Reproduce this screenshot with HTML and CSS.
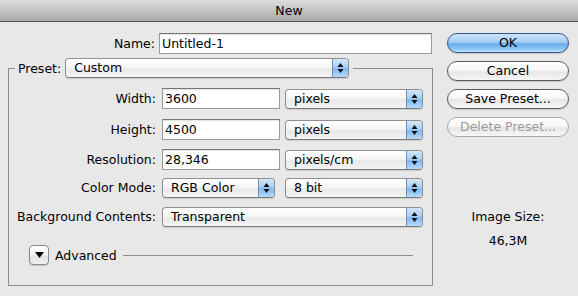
FILE: index.html
```html
<!DOCTYPE html>
<html>
<head>
<meta charset="utf-8">
<link rel="stylesheet" href="styles.css">
</head>
<body>
<div class="window">
  <div class="titlebar">New</div>
  <div class="content">
    <div class="main">
      <div class="name-row">
        <span class="name-lbl">Name:</span>
        <div class="field name-field">Untitled-1</div>
      </div>
      <fieldset class="group">
        <legend class="legend">
          <span>Preset:</span>
          <div class="popup preset"><span class="val">Custom</span><span class="step"><svg width="7" height="12" viewBox="0 0 7 12"><path d="M3.5 1 L6.5 5 L0.5 5 Z M0.5 7 L6.5 7 L3.5 11 Z" fill="#111"/></svg></span></div>
        </legend>
        <div class="row r-first">
          <span class="lbl">Width:</span>
          <div class="field num">3600</div>
          <div class="popup unit"><span class="val">pixels</span><span class="step"><svg width="7" height="12" viewBox="0 0 7 12"><path d="M3.5 1 L6.5 5 L0.5 5 Z M0.5 7 L6.5 7 L3.5 11 Z" fill="#111"/></svg></span></div>
        </div>
        <div class="row r-mid">
          <span class="lbl">Height:</span>
          <div class="field num">4500</div>
          <div class="popup unit"><span class="val">pixels</span><span class="step"><svg width="7" height="12" viewBox="0 0 7 12"><path d="M3.5 1 L6.5 5 L0.5 5 Z M0.5 7 L6.5 7 L3.5 11 Z" fill="#111"/></svg></span></div>
        </div>
        <div class="row r-res">
          <span class="lbl">Resolution:</span>
          <div class="field num">28,346</div>
          <div class="popup unit"><span class="val">pixels/cm</span><span class="step"><svg width="7" height="12" viewBox="0 0 7 12"><path d="M3.5 1 L6.5 5 L0.5 5 Z M0.5 7 L6.5 7 L3.5 11 Z" fill="#111"/></svg></span></div>
        </div>
        <div class="row r-sel r-color">
          <span class="lbl">Color Mode:</span>
          <div class="popup mode"><span class="val">RGB Color</span><span class="step"><svg width="7" height="12" viewBox="0 0 7 12"><path d="M3.5 1 L6.5 5 L0.5 5 Z M0.5 7 L6.5 7 L3.5 11 Z" fill="#111"/></svg></span></div>
          <div class="popup bits"><span class="val">8 bit</span><span class="step"><svg width="7" height="12" viewBox="0 0 7 12"><path d="M3.5 1 L6.5 5 L0.5 5 Z M0.5 7 L6.5 7 L3.5 11 Z" fill="#111"/></svg></span></div>
        </div>
        <div class="row r-sel r-bg">
          <span class="lbl">Background Contents:</span>
          <div class="popup bg"><span class="val">Transparent</span><span class="step"><svg width="7" height="12" viewBox="0 0 7 12"><path d="M3.5 1 L6.5 5 L0.5 5 Z M0.5 7 L6.5 7 L3.5 11 Z" fill="#111"/></svg></span></div>
        </div>
        <div class="advanced">
          <div class="disclosure"><svg width="9" height="6" viewBox="0 0 9 6"><path d="M0 0 L9 0 L4.5 6 Z" fill="#000"/></svg></div>
          <span class="adv-lbl">Advanced</span>
          <div class="adv-line"></div>
        </div>
      </fieldset>
    </div>
    <div class="side">
      <div class="btn btn-default">OK</div>
      <div class="btn">Cancel</div>
      <div class="btn">Save Preset...</div>
      <div class="btn btn-disabled">Delete Preset...</div>
      <div class="size-lbl">Image Size:</div>
      <div class="size-val">46,3M</div>
    </div>
  </div>
</div>
</body>
</html>
```
FILE: styles.css
```css
html, body {
  margin: 0;
  padding: 0;
}
body {
  width: 578px;
  height: 296px;
  overflow: hidden;
  background: #e8e8e8;
  font-family: "DejaVu Sans", "Liberation Sans", sans-serif;
  font-size: 12.5px;
  color: #000;
}
.window {
  width: 578px;
  height: 296px;
  background: #e8e8e8;
}
.titlebar {
  height: 21px;
  line-height: 21px;
  text-align: center;
  background: linear-gradient(#dedede, #bdbdbd 60%, #a9a9a9);
  border-bottom: 1px solid #555;
  font-size: 12.5px;
}
.content {
  display: flex;
}
.main {
  width: 433px;
}
.name-row {
  display: flex;
  align-items: center;
  margin-top: 11px;
}
.name-lbl {
  width: 155px;
  text-align: right;
  margin-right: 4px;
}
.field {
  box-sizing: border-box;
  height: 21px;
  background: #fff;
  border: 1px solid #9a9a9a;
  border-top-color: #777;
  box-shadow: inset 0 1px 1px rgba(0,0,0,0.12);
  padding-left: 2px;
  line-height: 19px;
}
.name-field {
  width: 273px;
}
.group {
  margin: 4px 0 0 8px;
  padding: 0 0 20px 0;
  width: 425px;
  box-sizing: border-box;
  border: 1px solid #8c8c8c;
  min-width: 0;
}
.legend {
  display: flex;
  align-items: center;
  gap: 4px;
  margin-left: 6px;
  padding: 0 4px 0 3px;
}
.popup {
  box-sizing: border-box;
  display: flex;
  height: 20px;
  border: 1px solid #8f8f8f;
  border-bottom-color: #7a7a7a;
  border-radius: 4px;
  background: linear-gradient(#ffffff, #f6f6f6 45%, #e9e9e9 55%, #f3f3f3);
  box-shadow: 0 1px 1px rgba(0,0,0,0.12);
  overflow: hidden;
}
.popup .val {
  flex: 1;
  padding-left: 8px;
  line-height: 18px;
  white-space: nowrap;
}
.popup .step {
  width: 15px;
  display: flex;
  align-items: center;
  justify-content: center;
  border-left: 1px solid #6d8fbd;
  background: linear-gradient(#d3e6f8, #a9cff3 45%, #7fb8ef 55%, #b5dcfb);
}
.preset {
  width: 284px;
}
.row {
  display: flex;
  align-items: flex-start;
}
.row .lbl {
  width: 147px;
  text-align: right;
  margin-right: 6px;
  line-height: 21px;
  white-space: nowrap;
}
.r-first { margin-top: 10px; }
.r-mid { margin-top: 10px; }
.r-res { margin-top: 9px; }
.r-color { margin-top: 8px; }
.r-bg { margin-top: 9px; }
.r-sel .lbl { line-height: 20px; }
.num {
  width: 118px;
}
.unit {
  width: 138px;
  margin-left: 5px;
  margin-top: 1px;
}
.mode {
  width: 113px;
}
.bits {
  width: 138px;
  margin-left: 10px;
}
.bg {
  width: 261px;
}
.advanced {
  display: flex;
  align-items: center;
  margin: 18px 19px 0 20px;
}
.disclosure {
  box-sizing: border-box;
  width: 20px;
  height: 20px;
  border: 1px solid #8a8a8a;
  border-radius: 4px;
  background: linear-gradient(#ffffff, #f3f3f3 50%, #e3e3e3 55%, #f1f1f1);
  box-shadow: 0 1px 1px rgba(0,0,0,0.15);
  display: flex;
  align-items: center;
  justify-content: center;
}
.adv-lbl {
  margin-left: 6px;
}
.adv-line {
  flex: 1;
  height: 1px;
  background: #8c8c8c;
  margin-left: 6px;
}
.side {
  margin-left: 14px;
  width: 122px;
  display: flex;
  flex-direction: column;
  padding-top: 11px;
}
.btn {
  box-sizing: border-box;
  height: 20px;
  margin-bottom: 8px;
  border: 1px solid #5a5a5a;
  border-radius: 10px;
  background: linear-gradient(#ffffff, #f7f7f7 45%, #e6e6e6 55%, #f7f7f7);
  box-shadow: 0 1px 1px rgba(0,0,0,0.15);
  text-align: center;
  line-height: 18px;
}
.btn-default {
  border-color: #34558a;
  background: linear-gradient(#cfe4f9, #a6cdf4 45%, #6aacec 55%, #8cc6f5 85%, #c2ebff);
}
.btn-disabled {
  color: #9a9a9a;
  border-color: #a9a9a9;
  box-shadow: none;
}
.size-lbl {
  margin-top: 64px;
  text-align: center;
  line-height: 15px;
}
.size-val {
  margin-top: 9px;
  text-align: center;
  line-height: 15px;
}
```
